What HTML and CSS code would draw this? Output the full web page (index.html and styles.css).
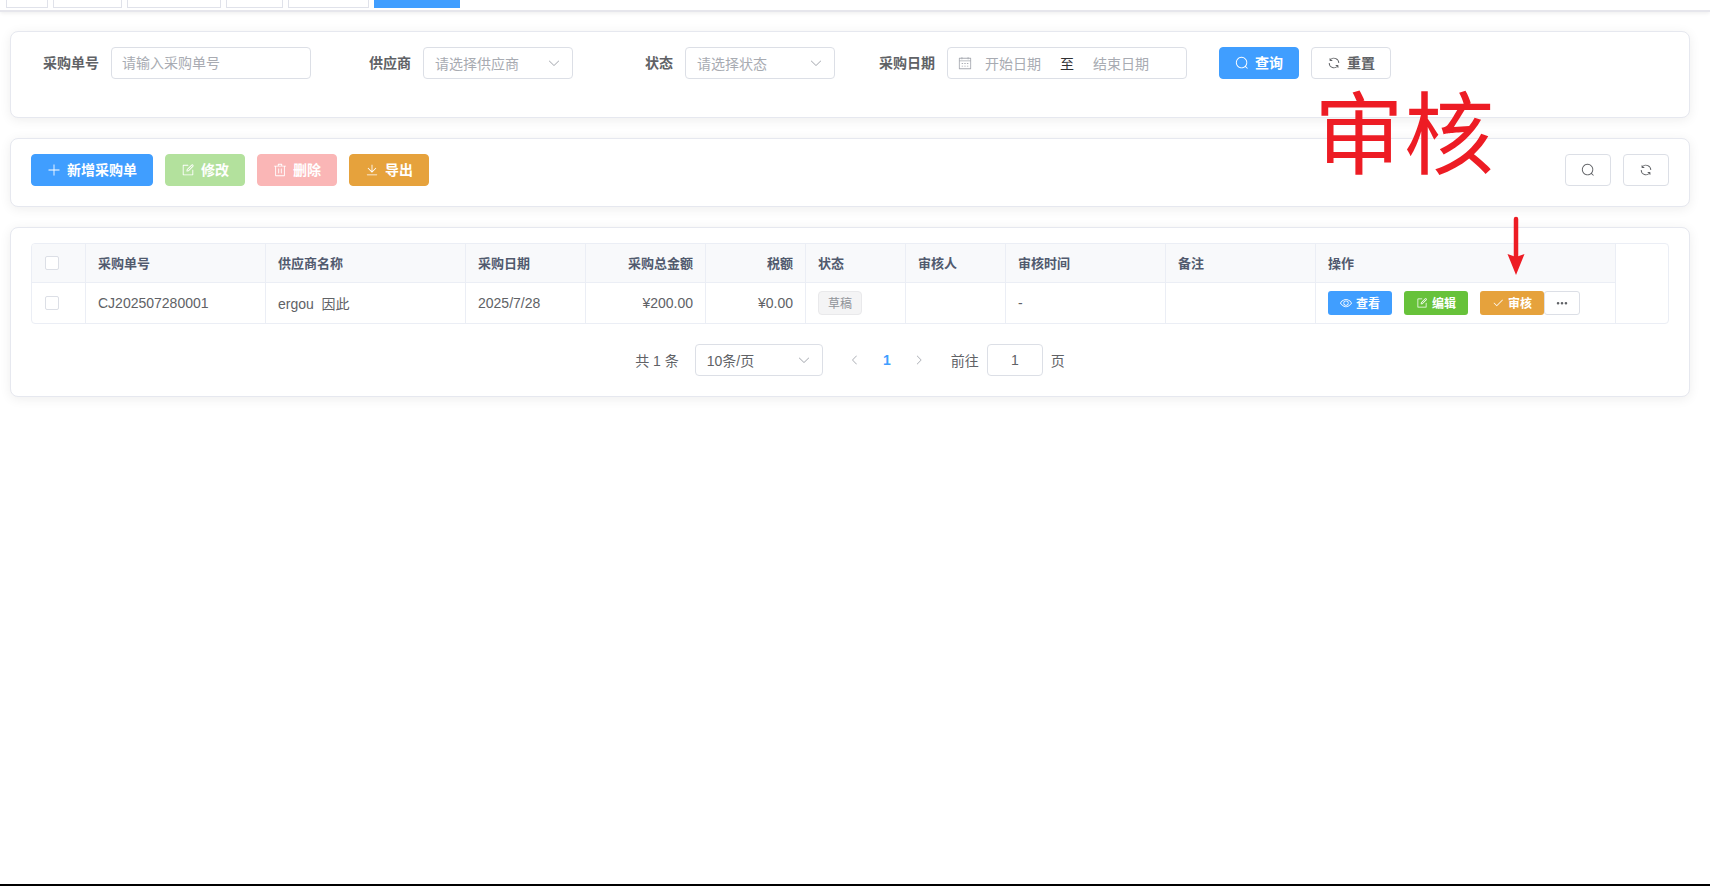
FILE: index.html
```html
<!DOCTYPE html>
<html lang="zh-CN">
<head>
<meta charset="utf-8">
<title>采购单</title>
<link rel="stylesheet" href="styles.css">
</head>
<body>
<svg class="sprite" xmlns="http://www.w3.org/2000/svg">
  <symbol id="i-search" viewBox="0 0 1024 1024"><path d="m795.904 750.72 124.992 124.928a32 32 0 0 1-45.248 45.248L750.656 795.904a416 416 0 1 1 45.248-45.248zM480 832a352 352 0 1 0 0-704 352 352 0 0 0 0 704z"/></symbol>
  <symbol id="i-refresh" viewBox="0 0 1024 1024"><path d="M771.776 794.88A384 384 0 0 1 128 512h64a320 320 0 0 0 555.712 216.448H654.72a32 32 0 1 1 0-64h149.056a32 32 0 0 1 32 32v148.928a32 32 0 1 1-64 0v-50.56zM276.288 295.616h92.992a32 32 0 0 1 0 64H220.16a32 32 0 0 1-32-32V178.56a32 32 0 0 1 64 0v50.56A384 384 0 0 1 896.128 512h-64a320 320 0 0 0-555.776-216.384z"/></symbol>
  <symbol id="i-plus" viewBox="0 0 1024 1024"><path d="M480 480V128a32 32 0 0 1 64 0v352h352a32 32 0 1 1 0 64H544v352a32 32 0 1 1-64 0V544H128a32 32 0 0 1 0-64h352z"/></symbol>
  <symbol id="i-edit" viewBox="0 0 1024 1024"><path d="M832 512a32 32 0 1 1 64 0v352a32 32 0 0 1-32 32H160a32 32 0 0 1-32-32V160a32 32 0 0 1 32-32h352a32 32 0 0 1 0 64H192v640h640V512z"/><path d="m469.952 554.24 52.8-7.552L847.104 222.4a32 32 0 1 0-45.248-45.248L477.44 501.44l-7.552 52.8zm422.4-422.4a96 96 0 0 1 0 135.808l-331.84 331.84a32 32 0 0 1-18.112 9.088L436.8 623.68a32 32 0 0 1-36.224-36.224l15.104-105.6a32 32 0 0 1 9.024-18.112l331.904-331.84a96 96 0 0 1 135.744 0z"/></symbol>
  <symbol id="i-delete" viewBox="0 0 1024 1024"><path d="M160 256H96a32 32 0 0 1 0-64h256V95.936a32 32 0 0 1 32-32h256a32 32 0 0 1 32 32V192h256a32 32 0 1 1 0 64h-64v672a32 32 0 0 1-32 32H192a32 32 0 0 1-32-32V256zm448-64v-64H416v64h192zM224 896h576V256H224v640zm192-128a32 32 0 0 1-32-32V416a32 32 0 0 1 64 0v320a32 32 0 0 1-32 32zm192 0a32 32 0 0 1-32-32V416a32 32 0 0 1 64 0v320a32 32 0 0 1-32 32z"/></symbol>
  <symbol id="i-download" viewBox="0 0 1024 1024"><path d="M160 832h704a32 32 0 1 1 0 64H160a32 32 0 1 1 0-64zm384-253.696 236.288-236.352 45.248 45.248L508.8 704 192 387.2l45.248-45.248L480 584.704V128h64v450.304z"/></symbol>
  <symbol id="i-view" viewBox="0 0 1024 1024"><path d="M512 160c320 0 512 352 512 352S832 864 512 864 0 512 0 512s192-352 512-352zm0 64c-225.28 0-384.128 208.064-436.8 288 52.608 79.872 211.456 288 436.8 288 225.28 0 384.128-208.064 436.8-288-52.608-79.872-211.456-288-436.8-288zm0 64a224 224 0 1 1 0 448 224 224 0 0 1 0-448zm0 64a160.192 160.192 0 0 0-160 160c0 88.192 71.744 160 160 160s160-71.808 160-160-71.744-160-160-160z"/></symbol>
  <symbol id="i-check" viewBox="0 0 1024 1024"><path d="M406.656 706.944 195.84 496.256a32 32 0 1 0-45.248 45.248l256 256 512-512a32 32 0 0 0-45.248-45.248L406.592 706.944z"/></symbol>
  <symbol id="i-down" viewBox="0 0 1024 1024"><path d="M831.872 340.864 512 652.672 192.128 340.864a30.592 30.592 0 0 0-42.752 0 29.12 29.12 0 0 0 0 41.6L489.664 714.24a32 32 0 0 0 44.672 0l340.288-331.712a29.12 29.12 0 0 0 0-41.728 30.592 30.592 0 0 0-42.752 0z"/></symbol>
  <symbol id="i-left" viewBox="0 0 1024 1024"><path d="M609.408 149.376 277.76 489.6a32 32 0 0 0 0 44.672l331.648 340.352a29.12 29.12 0 0 0 41.728 0 30.592 30.592 0 0 0 0-42.752L339.264 511.936l311.872-319.872a30.592 30.592 0 0 0 0-42.688 29.12 29.12 0 0 0-41.728 0z"/></symbol>
  <symbol id="i-right" viewBox="0 0 1024 1024"><path d="M340.864 149.312a30.592 30.592 0 0 0 0 42.752L652.736 512 340.864 831.872a30.592 30.592 0 0 0 0 42.752 29.12 29.12 0 0 0 41.728 0L714.24 534.336a32 32 0 0 0 0-44.672L382.592 149.376a29.12 29.12 0 0 0-41.728 0z"/></symbol>
  <symbol id="i-calendar" viewBox="0 0 1024 1024"><path d="M128 384v512h768V192H768v32a32 32 0 1 1-64 0v-32H320v32a32 32 0 0 1-64 0v-32H128v128h768v64H128zm192-256h384V96a32 32 0 1 1 64 0v32h160a32 32 0 0 1 32 32v768a32 32 0 0 1-32 32H96a32 32 0 0 1-32-32V160a32 32 0 0 1 32-32h160V96a32 32 0 0 1 64 0v32zm-32 384h64a32 32 0 0 1 0 64h-64a32 32 0 0 1 0-64zm0 192h64a32 32 0 1 1 0 64h-64a32 32 0 1 1 0-64zm192-192h64a32 32 0 0 1 0 64h-64a32 32 0 0 1 0-64zm0 192h64a32 32 0 1 1 0 64h-64a32 32 0 1 1 0-64zm192-192h64a32 32 0 1 1 0 64h-64a32 32 0 1 1 0-64zm0 192h64a32 32 0 1 1 0 64h-64a32 32 0 1 1 0-64z"/></symbol>
  <symbol id="i-more" viewBox="0 0 1024 1024"><path d="M176 416a112 112 0 1 1 0 224 112 112 0 0 1 0-224zm336 0a112 112 0 1 1 0 224 112 112 0 0 1 0-224zm336 0a112 112 0 1 1 0 224 112 112 0 0 1 0-224z"/></symbol>
</svg>

<div class="page">
  <header class="tagsbar">
    <span class="tag-tab w1"></span>
    <span class="tag-tab w2"></span>
    <span class="tag-tab w3"></span>
    <span class="tag-tab w4"></span>
    <span class="tag-tab w5"></span>
    <span class="tag-tab w6 active"></span>
  </header>

  <main class="content">
    <section class="card card-search">
      <form class="search-form">
        <div class="form-item">
          <label class="form-label">采购单号</label>
          <input class="field field-lg" type="text" placeholder="请输入采购单号">
        </div>
        <div class="form-item">
          <label class="form-label">供应商</label>
          <div class="field field-md select"><span class="placeholder">请选择供应商</span><svg class="ic ic-arrow"><use href="#i-down"/></svg></div>
        </div>
        <div class="form-item">
          <label class="form-label">状态</label>
          <div class="field field-md select"><span class="placeholder">请选择状态</span><svg class="ic ic-arrow"><use href="#i-down"/></svg></div>
        </div>
        <div class="form-item">
          <label class="form-label">采购日期</label>
          <div class="field field-range">
            <svg class="ic ic-calendar"><use href="#i-calendar"/></svg>
            <span class="range-part placeholder">开始日期</span>
            <span class="range-sep">至</span>
            <span class="range-part placeholder">结束日期</span>
          </div>
        </div>
        <div class="form-actions">
          <button class="btn btn-primary" type="button"><svg class="ic"><use href="#i-search"/></svg><span class="btn-text">查询</span></button>
          <button class="btn btn-default" type="button"><svg class="ic"><use href="#i-refresh"/></svg><span class="btn-text">重置</span></button>
        </div>
      </form>
    </section>

    <section class="card card-toolbar">
      <div class="toolbar-left">
        <button class="btn btn-primary" type="button"><svg class="ic"><use href="#i-plus"/></svg><span class="btn-text">新增采购单</span></button>
        <button class="btn btn-success-off" type="button"><svg class="ic"><use href="#i-edit"/></svg><span class="btn-text">修改</span></button>
        <button class="btn btn-danger-off" type="button"><svg class="ic"><use href="#i-delete"/></svg><span class="btn-text">删除</span></button>
        <button class="btn btn-warning" type="button"><svg class="ic"><use href="#i-download"/></svg><span class="btn-text">导出</span></button>
      </div>
      <div class="toolbar-right">
        <button class="btn btn-default btn-icon" type="button"><svg class="ic"><use href="#i-search"/></svg></button>
        <button class="btn btn-default btn-icon" type="button"><svg class="ic"><use href="#i-refresh"/></svg></button>
      </div>
    </section>

    <section class="card card-table">
      <div class="table-wrap">
        <table class="table">
          <colgroup>
            <col class="c55"><col class="c180"><col class="c200"><col class="c120"><col class="c120"><col class="c100"><col class="c100"><col class="c100"><col class="c160"><col class="c150"><col class="c300">
          </colgroup>
          <thead>
            <tr>
              <th class="cell-check"><span class="checkbox"></span></th>
              <th>采购单号</th>
              <th>供应商名称</th>
              <th>采购日期</th>
              <th class="num">采购总金额</th>
              <th class="num">税额</th>
              <th>状态</th>
              <th>审核人</th>
              <th>审核时间</th>
              <th>备注</th>
              <th>操作</th>
            </tr>
          </thead>
          <tbody>
            <tr>
              <td class="cell-check"><span class="checkbox"></span></td>
              <td>CJ202507280001</td>
              <td>ergou&nbsp; 因此</td>
              <td>2025/7/28</td>
              <td class="num">¥200.00</td>
              <td class="num">¥0.00</td>
              <td><span class="status-tag"><span class="btn-text">草稿</span></span></td>
              <td></td>
              <td>-</td>
              <td></td>
              <td>
                <div class="row-actions">
                  <button class="btn-sm btn-primary" type="button"><svg class="ic"><use href="#i-view"/></svg><span class="btn-text">查看</span></button>
                  <button class="btn-sm btn-success" type="button"><svg class="ic"><use href="#i-edit"/></svg><span class="btn-text">编辑</span></button>
                  <button class="btn-sm btn-warning" type="button"><svg class="ic"><use href="#i-check"/></svg><span class="btn-text">审核</span></button>
                  <button class="btn-sm btn-more" type="button"><svg class="ic"><use href="#i-more"/></svg></button>
                </div>
              </td>
            </tr>
          </tbody>
        </table>
      </div>

      <nav class="pagination">
        <span class="page-total">共 1 条</span>
        <div class="field page-size select"><span>10条/页</span><svg class="ic ic-arrow"><use href="#i-down"/></svg></div>
        <span class="page-btn first"><svg class="ic"><use href="#i-left"/></svg></span>
        <span class="page-btn current">1</span>
        <span class="page-btn"><svg class="ic"><use href="#i-right"/></svg></span>
        <span class="page-goto">前往</span>
        <input class="field page-input" type="text" value="1">
        <span class="page-unit">页</span>
      </nav>
    </section>
  </main>

  <div class="bottom-edge"></div>

  <div class="note-text">审核</div>
  <svg class="note-arrow" viewBox="0 0 20 60"><path class="note-shaft" d="M10 3V42"/><path class="note-head" d="M1.5 38 10 41 18.500 38 10 59z"/></svg>
</div>
</body>
</html>
```

FILE: styles.css
```css
* { box-sizing: border-box; }
html, body { margin: 0; height: 100%; background: #fff; }
body {
  font-family: "Liberation Sans", "Noto Sans CJK SC", sans-serif;
  font-size: 14px;
  color: #606266;
  overflow: hidden;
}
.sprite { display: none; }

.page { position: relative; height: 886px; display: flex; flex-direction: column; }

/* tag strip */
.tagsbar {
  flex: none;
  height: 12px;
  padding-left: 6px;
  display: flex;
  gap: 5px;
  align-items: flex-start;
  background: #fff;
  border-bottom: 2px solid #e6e6ec;
  box-shadow: 0 1px 4px rgba(0, 0, 0, .08);
}
.tag-tab { height: 8px; background: #fff; border: 1px solid #e0e2ea; border-top: 0; }
.tag-tab.w1 { width: 42px; }
.tag-tab.w2 { width: 69px; }
.tag-tab.w3 { width: 94px; }
.tag-tab.w4 { width: 57px; }
.tag-tab.w5 { width: 81px; }
.tag-tab.w6 { width: 86px; }
.tag-tab.active { background: #409eff; border-color: #409eff; }

.content { flex: 1; padding: 19px 20px 0 10px; display: flex; flex-direction: column; gap: 20px; }

.card {
  flex: none;
  padding: 15px 20px 20px;
  background: #fff;
  border: 1px solid #e6e8ef;
  border-radius: 8px;
  box-shadow: 0 2px 12px rgba(0, 0, 0, .07);
}
.card-toolbar { display: flex; justify-content: space-between; align-items: flex-start; }

/* search form */
.search-form { display: flex; align-items: flex-start; padding-bottom: 18px; }
.form-item { display: flex; align-items: center; margin-right: 32px; }
.form-label { width: 80px; padding-right: 12px; text-align: right; font-weight: 700; line-height: 32px; color: #606266; }

.field {
  height: 32px;
  border: 1px solid #dcdfe6;
  border-radius: 4px;
  background: #fff;
  font: inherit;
  color: #606266;
  outline: none;
}
input.field { padding: 0 11px; }
input.field::placeholder, .placeholder { color: #a8abb2; }
input.field-lg { width: 200px; padding-left: 10px; }
.field-md { width: 150px; }
.select { display: flex; align-items: center; justify-content: space-between; padding: 0 11px; }
.field-range { width: 240px; display: flex; align-items: center; padding: 0 10px; }
.range-part { flex: none; width: 80px; text-align: center; }
.range-sep { width: 28px; text-align: center; color: #303133; flex: none; }

.ic { width: 14px; height: 14px; fill: currentColor; flex: none; }
.ic-arrow { color: #a8abb2; }
.ic-calendar { color: #a8abb2; margin-right: 1px; }

/* buttons */
.btn {
  height: 32px;
  padding: 0 15px;
  display: inline-flex;
  align-items: center;
  justify-content: center;
  gap: 6px;
  border: 1px solid transparent;
  border-radius: 4px;
  font: inherit;
  font-weight: 700;
  color: #fff;
}
.btn-text { margin-bottom: 2px; }
.btn-primary { background: #409eff; border-color: #409eff; color: #fff; }
.btn-success { background: #67c23a; border-color: #67c23a; color: #fff; }
.btn-success-off { background: #b3e19d; border-color: #b3e19d; }
.btn-danger-off { background: #fab6b6; border-color: #fab6b6; }
.btn-warning { background: #e6a23c; border-color: #e6a23c; color: #fff; }
.btn-default { background: #fff; border-color: #dcdfe6; color: #606266; }
.btn-icon { width: 46px; padding: 0; }

.form-actions { display: flex; gap: 12px; }
.toolbar-left, .toolbar-right { display: flex; gap: 12px; }

/* table */
.table-wrap {
  height: 81px;
  border: 1px solid #ebeef5;
  border-radius: 4px;
  overflow: hidden;
}
.table { width: 1584px; table-layout: fixed; border-collapse: separate; border-spacing: 0; }
.c55 { width: 54px; }
.c180 { width: 180px; }
.c200 { width: 200px; }
.c120 { width: 120px; }
.c100 { width: 100px; }
.c160 { width: 160px; }
.c150 { width: 150px; }
.c300 { width: 300px; }
.table th, .table td {
  height: 40px;
  padding: 0 12px;
  text-align: left;
  border-right: 1px solid #ebeef5;
  border-bottom: 1px solid #ebeef5;
  font-weight: 400;
  overflow: hidden;
  white-space: nowrap;
}
.table th { height: 39px; padding-bottom: 2px; background: #f8f9fb; color: #515a6e; font-size: 13px; font-weight: 700; }
.table tbody td { border-bottom: 0; }
.table .num { text-align: right; }
.table .cell-check { padding: 0 0 0 13px; }
.checkbox { display: block; width: 14px; height: 14px; border: 1px solid #dcdfe6; border-radius: 2px; background: #fff; }

.status-tag {
  display: inline-flex;
  align-items: center;
  justify-content: center;
  width: 44px;
  height: 24px;
  font-size: 12px;
  color: #909399;
  background: #f4f4f5;
  border: 1px solid #e9e9eb;
  border-radius: 4px;
}

.row-actions { display: flex; align-items: center; }
.btn-sm {
  width: 64px;
  height: 24px;
  margin-right: 12px;
  padding: 0;
  display: inline-flex;
  align-items: center;
  justify-content: center;
  gap: 4px;
  border: 1px solid transparent;
  border-radius: 3px;
  font: inherit;
  font-size: 12px;
  font-weight: 700;
}
.btn-sm .ic { width: 12px; height: 12px; }
.btn-sm.btn-warning { margin-right: 0; }
.btn-more { width: 36px; margin-right: 0; background: #fff; border-color: #dcdfe6; color: #606266; }

/* pagination */
.pagination { margin-top: 20px; display: flex; align-items: center; justify-content: center; height: 32px; }
.page-total { margin-right: 16px; }
.page-size { width: 128px; }
.page-btn { width: 32px; height: 32px; display: flex; align-items: center; justify-content: center; color: #a8abb2; font-weight: 700; }
.page-btn .ic { width: 12px; height: 12px; }
.page-btn.first { margin-left: 16px; }
.page-btn.current { color: #409eff; }
.page-goto { margin-left: 16px; margin-right: 8px; }
.page-input { width: 56px; text-align: center; }
.page-unit { margin-left: 8px; }

.bottom-edge { flex: none; height: 2px; background: #000; }

/* annotations drawn over the screenshot */
.note-text {
  position: absolute;
  left: 1314px;
  top: 72px;
  font-size: 90px;
  line-height: 128px;
  color: #ed1c24;
  white-space: nowrap;
}
.note-arrow { position: absolute; left: 1506px; top: 216px; width: 20px; height: 60px; }
.note-shaft { stroke: #ed1c24; stroke-width: 4.5; stroke-linecap: round; fill: none; }
.note-head { fill: #ed1c24; }
```
